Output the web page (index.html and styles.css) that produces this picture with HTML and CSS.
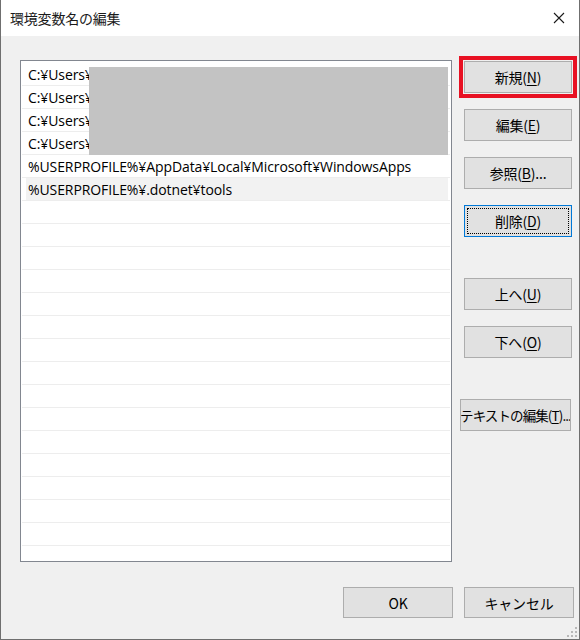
FILE: index.html
```html
<!DOCTYPE html>
<html lang="ja">
<head>
<meta charset="utf-8">
<title>環境変数名の編集</title>
<link rel="stylesheet" href="styles.css">
</head>
<body>
<div class="window">
  <div class="titlebar">
    <span class="title">環境変数名の編集</span>
    <svg class="close" width="12" height="12" viewBox="0 0 12 12"><path d="M1 1L11 11M11 1L1 11" stroke="#1a1a1a" stroke-width="1.1" fill="none"/></svg>
  </div>
  <div class="content">
    <div class="main">
      <div class="list">
        <div class="row"><span class="cell">C:¥Users¥</span></div>
        <div class="row"><span class="cell">C:¥Users¥</span></div>
        <div class="row"><span class="cell">C:¥Users¥</span></div>
        <div class="row"><span class="cell">C:¥Users¥</span></div>
        <div class="row"><span class="cell">%USERPROFILE%¥AppData¥Local¥Microsoft¥WindowsApps</span></div>
        <div class="row hl"><span class="cell">%USERPROFILE%¥.dotnet¥tools</span></div>
        <div class="row"><span class="cell"></span></div>
        <div class="row"><span class="cell"></span></div>
        <div class="row"><span class="cell"></span></div>
        <div class="row"><span class="cell"></span></div>
        <div class="row"><span class="cell"></span></div>
        <div class="row"><span class="cell"></span></div>
        <div class="row"><span class="cell"></span></div>
        <div class="row"><span class="cell"></span></div>
        <div class="row"><span class="cell"></span></div>
        <div class="row"><span class="cell"></span></div>
        <div class="row"><span class="cell"></span></div>
        <div class="row"><span class="cell"></span></div>
        <div class="row"><span class="cell"></span></div>
        <div class="row"><span class="cell"></span></div>
        <div class="row"><span class="cell"></span></div>
        <div class="row"><span class="cell"></span></div>
        <div class="redact"></div>
      </div>
      <div class="buttons">
        <button class="btn highlight">新規(<u>N</u>)</button>
        <button class="btn">編集(<u>E</u>)</button>
        <button class="btn">参照(<u>B</u>)...</button>
        <button class="btn focused"><span class="focusring">削除(<u>D</u>)</span></button>
        <button class="btn gap">上へ(<u>U</u>)</button>
        <button class="btn">下へ(<u>O</u>)</button>
        <button class="btn gap wide">テキストの編集(<u>T</u>)...</button>
      </div>
    </div>
    <div class="footer">
      <button class="btn foot">OK</button>
      <button class="btn foot">キャンセル</button>
    </div>
  </div>
  <svg class="grip" width="10" height="10" viewBox="0 0 10 10">
    <rect x="8" y="0" width="2" height="2" fill="#b8b8b8"/>
    <rect x="4" y="4" width="2" height="2" fill="#b8b8b8"/>
    <rect x="8" y="4" width="2" height="2" fill="#b8b8b8"/>
    <rect x="0" y="8" width="2" height="2" fill="#b8b8b8"/>
    <rect x="4" y="8" width="2" height="2" fill="#b8b8b8"/>
    <rect x="8" y="8" width="2" height="2" fill="#b8b8b8"/>
  </svg>
</div>
</body>
</html>
```
FILE: styles.css
```css
html, body {
  margin: 0;
  padding: 0;
  background: #f0f0f0;
}
body {
  font-family: "Open Sans", "Noto Sans CJK JP", sans-serif;
  font-size: 14px;
  color: #000;
}
.window {
  position: relative;
  width: 580px;
  height: 640px;
  box-sizing: border-box;
  border-left: 1px solid #6f6f6f;
  border-right: 1px solid #6f6f6f;
  border-bottom: 1px solid #6f6f6f;
  background: #f0f0f0;
  overflow: hidden;
}
.titlebar {
  height: 36px;
  background: #fff;
  display: flex;
  align-items: center;
  justify-content: space-between;
  padding: 0 14px 0 9px;
}
.title {
  font-family: "Noto Sans CJK JP", sans-serif;
  font-size: 14px;
  color: #1a1a1a;
  letter-spacing: -0.2px;
}
.close {
  display: block;
}
.content {
  display: flex;
  flex-direction: column;
}
.main {
  display: flex;
  padding-top: 24px;
  gap: 12px;
}
.list {
  position: relative;
  margin-left: 19px;
  width: 432px;
  height: 502px;
  box-sizing: border-box;
  border: 1px solid #828790;
  background: #fff;
  padding: 2px 1px 0 1px;
  overflow: hidden;
}
.row {
  height: 22px;
  border-bottom: 1px solid #ededed;
  display: flex;
  padding: 0 2px 0 4px;
}
.cell {
  flex: 1;
  padding-left: 2px;
  line-height: 23px;
  white-space: nowrap;
  font-size: 14px;
  letter-spacing: -0.1px;
}
.row.hl .cell {
  background: #f2f2f2;
}
.redact {
  position: absolute;
  left: 68px;
  top: 6px;
  width: 359px;
  height: 88px;
  background: #c3c3c3;
}
.buttons {
  display: flex;
  flex-direction: column;
  align-items: flex-start;
  padding-top: 1px;
  gap: 16px;
}
.btn {
  width: 108px;
  height: 32px;
  box-sizing: border-box;
  background: #e1e1e1;
  border: 1px solid #adadad;
  font-family: "Noto Sans CJK JP", sans-serif;
  font-size: 14px;
  color: #000;
  padding: 0;
  display: flex;
  align-items: center;
  justify-content: center;
  letter-spacing: -0.2px;
  white-space: nowrap;
}
.btn u {
  text-underline-offset: 2px;
}
.btn.highlight {
  outline: 4px solid #e81123;
  outline-offset: 1px;
}
.btn.focused {
  border: 1px solid #0078d7;
  padding: 2px;
}
.focusring {
  flex: 1;
  align-self: stretch;
  display: flex;
  align-items: center;
  justify-content: center;
  border: 1px dotted #000;
}
.btn.gap {
  margin-top: 25px;
}
.btn.wide {
  width: 111px;
  margin-left: -4px;
  letter-spacing: -0.9px;
  font-size: 13.5px;
  overflow: hidden;
}
.footer {
  display: flex;
  gap: 11px;
  margin-top: 25px;
  padding-left: 342px;
}
.btn.foot {
  width: 110px;
  height: 31px;
}
.grip {
  position: absolute;
  right: 2px;
  bottom: 2px;
}
```
